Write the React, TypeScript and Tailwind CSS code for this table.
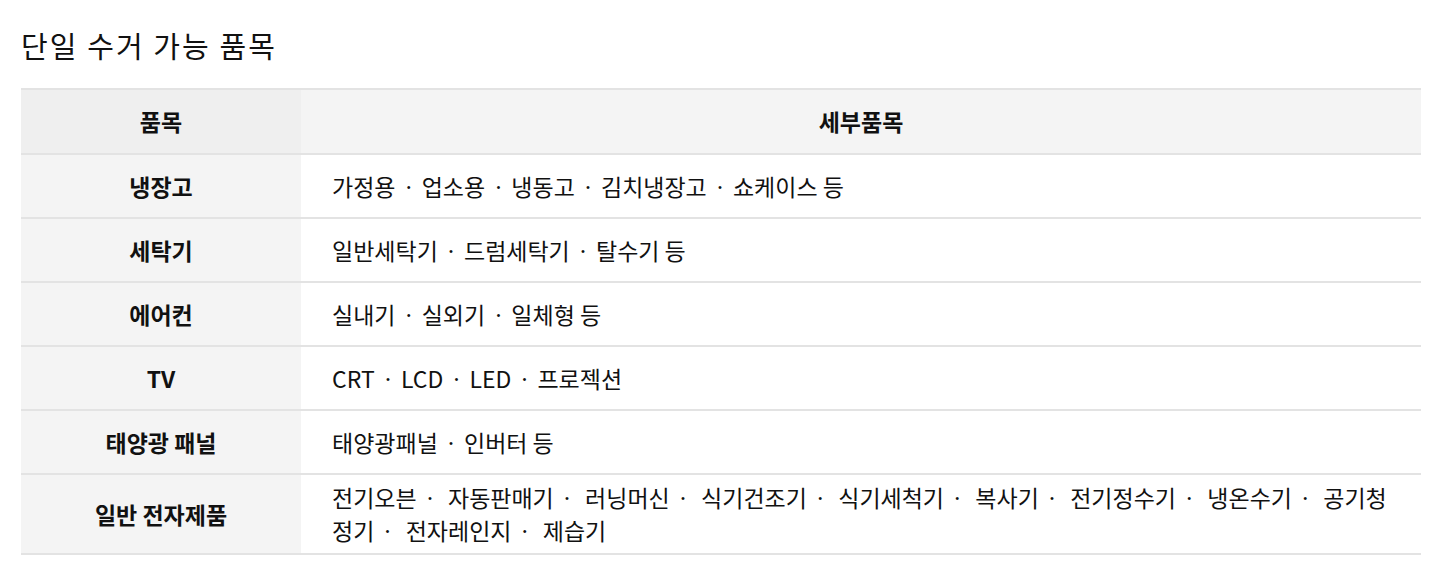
const rows: { name: string; items: string[]; sep: string }[] = [
  { name: '냉장고', items: ['가정용', '업소용', '냉동고', '김치냉장고', '쇼케이스 등'], sep: '' },
  { name: '세탁기', items: ['일반세탁기', '드럼세탁기', '탈수기 등'], sep: '' },
  { name: '에어컨', items: ['실내기', '실외기', '일체형 등'], sep: '' },
  { name: 'TV', items: ['CRT', 'LCD', 'LED', '프로젝션'], sep: '' },
  { name: '태양광 패널', items: ['태양광패널', '인버터 등'], sep: '' },
  {
    name: '일반 전자제품',
    items: [
      '전기오븐',
      '자동판매기',
      '러닝머신',
      '식기건조기',
      '식기세척기',
      '복사기',
      '전기정수기',
      '냉온수기',
      '공기청정기',
      '전자레인지',
      '제습기',
    ],
    sep: ' ',
  },
];

export default function App() {
  return (
    <div
      className="min-h-screen bg-white px-[21px] pt-[25px] text-[#111]"
      style={{ fontFamily: '"Noto Sans CJK KR", "Noto Sans", sans-serif' }}
    >
      {/* Title */}
      <h2 className="h-[40px] text-[29px] leading-[40px] font-normal tracking-[2.1px]">단일 수거 가능 품목</h2>

      <table className="mt-[23px] w-[1400px] table-fixed border-collapse">
        <colgroup>
          <col className="w-[280px]" />
          <col />
        </colgroup>
        <thead>
          <tr className="border-t-2 border-b-2 border-[#e3e3e3]">
            <th className="h-[65px] bg-[#efefef] text-center align-middle text-[23px] font-bold">품목</th>
            <th className="h-[65px] bg-[#f4f4f4] text-center align-middle text-[23px] font-bold">세부품목</th>
          </tr>
        </thead>
        <tbody>
          {rows.map((row) => (
            <tr key={row.name} className="border-b-2 border-[#e3e3e3]">
              <td className="h-[64px] bg-[#f4f4f4] text-center align-middle text-[23px] font-bold">
                {row.name}
              </td>
              <td className="h-[64px] px-[31px] py-[6px] align-middle text-[23px] leading-[33px] break-all">
                {row.items.map((item, i) => (
                  <span key={item}>
                    {i > 0 && <span className="mx-[2.5px]">ㆍ</span>}
                    {i > 0 && row.sep}
                    {item}
                  </span>
                ))}
              </td>
            </tr>
          ))}
        </tbody>
      </table>
    </div>
  );
}
